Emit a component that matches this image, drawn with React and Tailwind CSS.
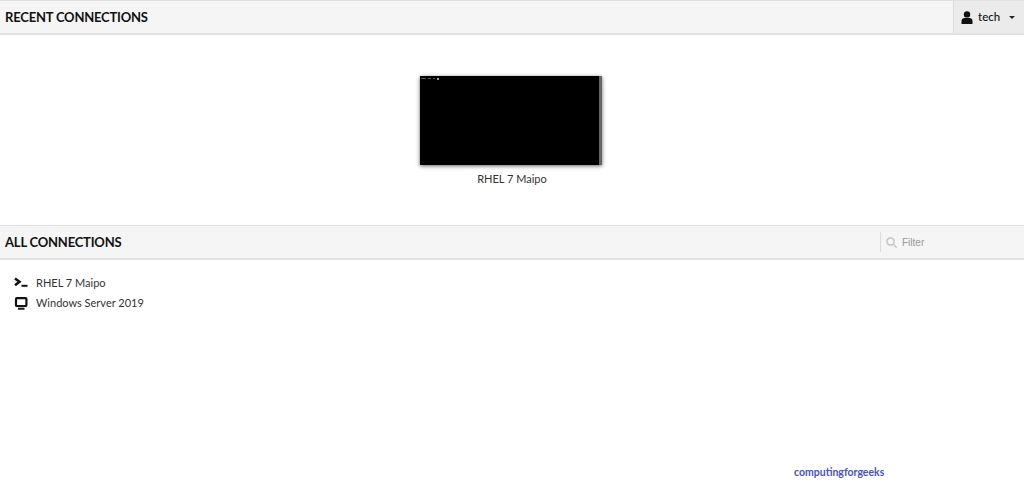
import React from 'react';

const UserIcon = () => (
  <svg width="12" height="13" viewBox="0 0 12 13" className="text-[#111]" fill="currentColor">
    <circle cx="6" cy="3.4" r="3.2" />
    <path d="M0.5 13V10.2C0.5 8.2 2 7 3.6 7H8.4C10 7 11.5 8.2 11.5 10.2V13Z" />
  </svg>
);

const TerminalIcon = () => (
  <svg width="14" height="12" viewBox="0 0 14 12" fill="none" stroke="#111" strokeWidth="2.5">
    <path d="M1 1.5L5.5 4.8L1 8.2" />
    <path d="M7.5 8.8H13.5" strokeWidth="2" />
  </svg>
);

const DesktopIcon = () => (
  <svg width="14" height="13" viewBox="0 0 14 13" fill="none">
    <rect x="2" y="1.2" width="10.4" height="7.8" stroke="#111" strokeWidth="2.2" rx="0.8" />
    <path d="M4 11.7H10.5" stroke="#111" strokeWidth="2" />
  </svg>
);

const SearchIcon = () => (
  <svg width="11" height="11" viewBox="0 0 11 11" fill="none" stroke="#bbb" strokeWidth="1.2">
    <circle cx="4.5" cy="4.5" r="3.6" />
    <path d="M7.2 7.2L10.5 10.5" />
  </svg>
);

const SectionHeader = ({ title, children }) => (
  <div className="h-[35px] flex items-stretch justify-between bg-[#f5f5f5] border-t border-b-2 border-t-[#e0e0e0] border-b-[#e2e2e2]">
    <h2 className="pl-[5px] pt-[2px] flex items-center text-[13px] tracking-[-0.2px] font-bold text-[#111]">{title}</h2>
    {children}
  </div>
);

export default function App() {
  return (
    <div className="relative h-[494px] bg-white overflow-hidden font-['Lato','Liberation_Sans',sans-serif]">
      <SectionHeader title="RECENT CONNECTIONS">
        <div className="w-[71px] flex items-center gap-[5px] pl-[7px] bg-[#ebebeb] border-l border-[#dcdcdc] text-[11.5px] font-medium text-[#111]">
          <UserIcon />
          <span>tech</span>
          <span className="ml-[4px] w-0 h-0 border-x-[3px] border-x-transparent border-t-[3px] border-t-[#222]" />
        </div>
      </SectionHeader>

      <div className="h-[190px] pt-[41px] flex flex-col items-center">
        <div className="mr-[2px] w-[182px] h-[89px] bg-black border-r-[3px] border-r-[#666] shadow-[0_1px_4px_rgba(0,0,0,0.6)] pl-[1px] pt-[2px] flex items-start gap-[2px]">
          <div className="w-[5px] h-[1px] bg-[#555]" />
          <div className="w-[3px] h-[1px] bg-[#555]" />
          <div className="w-[2px] h-[1px] bg-[#555]" />
          <div className="w-[2px] h-[2px] bg-[#999]" />
        </div>
        <p className="mt-[7px] text-[11px] leading-[14px] text-[#333]">RHEL 7 Maipo</p>
      </div>

      <SectionHeader title="ALL CONNECTIONS">
        <div className="w-[144px] my-[6px] flex items-center gap-[5px] pl-[5px] border-l border-[#dcdcdc]">
          <SearchIcon />
          <span className="text-[10px] text-[#999] font-['Liberation_Sans',sans-serif]">Filter</span>
        </div>
      </SectionHeader>

      <ul className="pt-[13px] pl-[14px] text-[11px] text-[#333]">
        <li className="h-[20px] flex items-center gap-[8px]">
          <TerminalIcon />
          <span>RHEL 7 Maipo</span>
        </li>
        <li className="h-[20px] flex items-center gap-[8px]">
          <DesktopIcon />
          <span>Windows Server 2019</span>
        </li>
      </ul>

      <span className="absolute left-[794px] top-[465px] text-[10.5px] leading-[14px] font-bold text-[#4a4fc4]">computingforgeeks</span>
    </div>
  );
}
